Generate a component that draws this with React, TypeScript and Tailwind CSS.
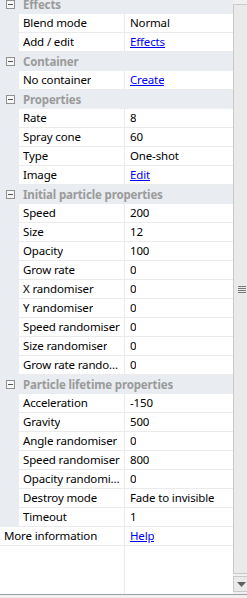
import React from 'react'

type Row =
  | { kind: 'header'; label: string }
  | { kind: 'prop'; name: string; value: string; link?: boolean }

const rows: Row[] = [
  { kind: 'header', label: 'Effects' },
  { kind: 'prop', name: 'Blend mode', value: 'Normal' },
  { kind: 'prop', name: 'Add / edit', value: 'Effects', link: true },
  { kind: 'header', label: 'Container' },
  { kind: 'prop', name: 'No container', value: 'Create', link: true },
  { kind: 'header', label: 'Properties' },
  { kind: 'prop', name: 'Rate', value: '8' },
  { kind: 'prop', name: 'Spray cone', value: '60' },
  { kind: 'prop', name: 'Type', value: 'One-shot' },
  { kind: 'prop', name: 'Image', value: 'Edit', link: true },
  { kind: 'header', label: 'Initial particle properties' },
  { kind: 'prop', name: 'Speed', value: '200' },
  { kind: 'prop', name: 'Size', value: '12' },
  { kind: 'prop', name: 'Opacity', value: '100' },
  { kind: 'prop', name: 'Grow rate', value: '0' },
  { kind: 'prop', name: 'X randomiser', value: '0' },
  { kind: 'prop', name: 'Y randomiser', value: '0' },
  { kind: 'prop', name: 'Speed randomiser', value: '0' },
  { kind: 'prop', name: 'Size randomiser', value: '0' },
  { kind: 'prop', name: 'Grow rate randomiser', value: '0' },
  { kind: 'header', label: 'Particle lifetime properties' },
  { kind: 'prop', name: 'Acceleration', value: '-150' },
  { kind: 'prop', name: 'Gravity', value: '500' },
  { kind: 'prop', name: 'Angle randomiser', value: '0' },
  { kind: 'prop', name: 'Speed randomiser', value: '800' },
  { kind: 'prop', name: 'Opacity randomiser', value: '0' },
  { kind: 'prop', name: 'Destroy mode', value: 'Fade to invisible' },
  { kind: 'prop', name: 'Timeout', value: '1' },
]

function Collapse() {
  return (
    <span className="ml-[6px] flex h-[9px] w-[9px] shrink-0 items-center justify-center border border-[#919191] bg-[#f7f7f7]">
      <span className="h-px w-[5px] bg-[#555]" />
    </span>
  )
}

function Value({ text, link }: { text: string; link?: boolean }) {
  return (
    <span
      className={`truncate pl-[5px] leading-[18px] ${link ? 'text-[#0000ff] underline' : 'text-black'}`}
    >
      {text}
    </span>
  )
}

export default function App() {
  return (
    <div
      className="flex h-[598px] w-[247px] flex-col overflow-hidden bg-[#f0f0f0] text-[11.5px] tracking-[-0.15px]"
      style={{ fontFamily: '"Noto Sans", "Open Sans", sans-serif' }}
    >
      <div className="flex h-[595px] border-b border-[#a0a0a0]">
        {/* Grid */}
        <div className="flex w-[233px] flex-col overflow-hidden bg-white">
          <div className="-mt-[5px] flex flex-col">
            {rows.map((row, i) =>
              row.kind === 'header' ? (
                <div key={i} className="flex h-[19px] items-center bg-[#e9ecf1]">
                  <Collapse />
                  <span className="ml-[8px] truncate font-bold leading-[19px] text-[#9b9b9b]">
                    {row.label}
                  </span>
                </div>
              ) : (
                <div key={i} className="flex h-[19px] bg-[#e9ecf1]">
                  <div className="w-[19px] shrink-0" />
                  <div className="flex min-w-0 flex-1 border-b border-[#ebebeb] bg-white">
                    <div className="flex w-[106px] shrink-0 items-center overflow-hidden border-r border-[#ebebeb] pl-[4px] pr-px">
                      <span className="truncate leading-[18px] text-black">{row.name}</span>
                    </div>
                    <div className="flex min-w-0 flex-1 items-center">
                      <Value text={row.value} link={row.link} />
                    </div>
                  </div>
                </div>
              )
            )}
            <div className="flex h-[19px] border-b border-[#ebebeb] bg-white">
              <div className="flex w-[125px] shrink-0 items-center overflow-hidden border-r border-[#ebebeb] pl-[4px] pr-px">
                <span className="truncate leading-[18px] text-black">More information</span>
              </div>
              <div className="flex min-w-0 flex-1 items-center">
                <Value text="Help" link />
              </div>
            </div>
          </div>
          <div className="flex flex-1">
            <div className="w-[125px] border-r border-[#ebebeb]" />
            <div className="flex-1" />
          </div>
        </div>

        {/* Scrollbar */}
        <div className="flex w-[14px] flex-col bg-[#f0f0f0] pt-[4px]">
          <div className="flex flex-1 items-center border border-r-0 border-[#c9c9c9] bg-[#eaeaea] pl-[4px]">
            <div className="flex flex-col gap-px">
              <span className="h-px w-[8px] bg-[#7a7a7a]" />
              <span className="h-px w-[8px] bg-[#7a7a7a]" />
              <span className="h-px w-[8px] bg-[#7a7a7a]" />
              <span className="h-px w-[8px] bg-[#7a7a7a]" />
            </div>
          </div>
          <div className="mt-[2px] flex h-[16px] items-center border border-r-0 border-[#c9c9c9] bg-[#eaeaea] pl-[3px]">
            <svg width="9" height="5" viewBox="0 0 9 5">
              <path d="M0 0h9L4.5 5z" fill="#606060" />
            </svg>
          </div>
          <div className="h-[2px]" />
        </div>
      </div>
    </div>
  )
}
